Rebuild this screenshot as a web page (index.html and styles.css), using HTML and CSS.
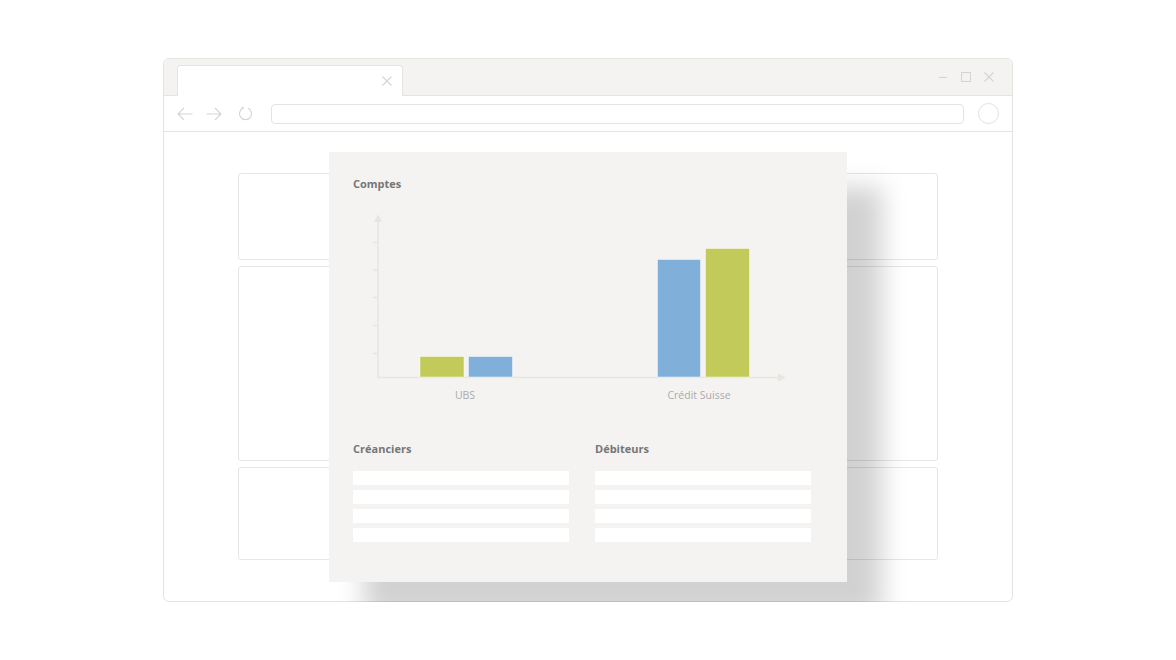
FILE: index.html
```html
<!DOCTYPE html>
<html lang="fr">
<head>
    <meta charset="UTF-8">
    <meta name="viewport" content="width=device-width, initial-scale=1.0">
    <title>Comptes</title>
    <link rel="stylesheet" href="styles.css">
</head>
<body>
    <div class="window">
        <div class="tabstrip">
            <div class="tab">
                <svg class="icon-close" width="10" height="10" viewBox="0 0 10 10">
                    <path d="M0.5 0.5 L9.5 9.5 M9.5 0.5 L0.5 9.5" />
                </svg>
            </div>
            <div class="win-controls">
                <svg width="10" height="10" viewBox="0 0 10 10"><path d="M1 5.5 H9" /></svg>
                <svg width="10" height="10" viewBox="0 0 10 10"><rect x="0.5" y="0.5" width="9" height="9" /></svg>
                <svg width="10" height="10" viewBox="0 0 10 10"><path d="M0.5 0.5 L9.5 9.5 M9.5 0.5 L0.5 9.5" /></svg>
            </div>
        </div>

        <div class="toolbar">
            <svg class="nav back" width="16" height="14" viewBox="0 0 16 14">
                <path d="M15.5 7 H1 M7 1 L1 7 L7 13" />
            </svg>
            <svg class="nav forward" width="16" height="14" viewBox="0 0 16 14">
                <path d="M0.5 7 H15 M9 1 L15 7 L9 13" />
            </svg>
            <svg class="nav reload" width="15" height="15" viewBox="0 0 15 15">
                <path d="M5.2 2.1 A6 6 0 1 0 9.8 2.1" />
                <path d="M4.6 0.5 L5.2 2.1 L3.4 2.8" />
            </svg>
            <div class="address"></div>
            <div class="profile"></div>
        </div>

        <div class="content">
            <div class="panel panel-top"></div>
            <div class="panel panel-mid"></div>
            <div class="panel panel-bottom"></div>

            <div class="card">
                <h2 class="card-title">Comptes</h2>
                <svg class="chart" width="470" height="196" viewBox="0 0 470 196">
                    <g class="axis">
                        <path d="M25 11 V167.5 H426" />
                        <path d="M20 32.5 H25 M20 60 H25 M20 87.5 H25 M20 115.5 H25 M20 143.5 H25" />
                        <polygon points="21,12 25,4.5 29,12" />
                        <polygon points="425,163.5 433,167.5 425,171.5" />
                    </g>
                    <g class="bars">
                        <rect class="green" x="67" y="146.5" width="44" height="20.5" />
                        <rect class="blue" x="115.5" y="146.5" width="44" height="20.5" />
                        <rect class="blue" x="304.5" y="49.5" width="43" height="117.5" />
                        <rect class="green" x="352.5" y="38.5" width="44" height="128.5" />
                    </g>
                    <text class="label" x="112" y="189">UBS</text>
                    <text class="label" x="346" y="189">Crédit Suisse</text>
                </svg>

                <div class="lists">
                    <div class="list">
                        <h3 class="list-title">Créanciers</h3>
                        <div class="row"></div>
                        <div class="row"></div>
                        <div class="row"></div>
                        <div class="row"></div>
                    </div>
                    <div class="list">
                        <h3 class="list-title">Débiteurs</h3>
                        <div class="row"></div>
                        <div class="row"></div>
                        <div class="row"></div>
                        <div class="row"></div>
                    </div>
                </div>
            </div>
        </div>
    </div>
</body>
</html>
```

FILE: styles.css
```css
body {
    margin: 0;
    background-color: #ffffff;
    font-family: 'Open Sans', 'Lato', sans-serif;
}

.window {
    position: relative;
    box-sizing: border-box;
    width: 850px;
    height: 544px;
    margin: 58px auto 0;
    border: 1px solid #e6e4e1;
    border-radius: 6px;
    background-color: #fff;
}

/* tab strip */

.tabstrip {
    display: flex;
    align-items: flex-end;
    height: 36px;
    background-color: #f4f3f1;
    border-bottom: 1px solid #e6e4e1;
    border-radius: 6px 6px 0 0;
}

.tab {
    position: relative;
    box-sizing: border-box;
    display: flex;
    justify-content: flex-end;
    align-items: center;
    width: 226px;
    height: 31px;
    margin-left: 13px;
    margin-bottom: -1px;
    padding-right: 10px;
    background-color: #fff;
    border: 1px solid #e6e4e1;
    border-bottom: none;
    border-radius: 4px 4px 0 0;
}

.tab svg,
.win-controls svg,
.nav {
    fill: none;
    stroke: #d6d4d1;
    stroke-width: 1.1;
}

.win-controls {
    display: flex;
    align-items: center;
    gap: 13px;
    margin-left: auto;
    padding-right: 18px;
    align-self: center;
}

/* toolbar */

.toolbar {
    display: flex;
    align-items: center;
    height: 35px;
    padding: 0 13px;
    border-bottom: 1px solid #e6e4e1;
}

.nav.forward {
    margin-left: 13px;
}

.nav.reload {
    margin-left: 16px;
}

.address {
    flex: 1;
    height: 18px;
    margin-left: 18px;
    border: 1px solid #e6e4e1;
    border-radius: 4px;
}

.profile {
    box-sizing: border-box;
    width: 21px;
    height: 21px;
    margin-left: 14px;
    border: 1px solid #e3e1de;
    border-radius: 50%;
}

/* page content */

.content {
    display: flex;
    flex-direction: column;
    gap: 6px;
    padding: 41px 74px;
}

.panel {
    border: 1px solid #e6e6e6;
    border-radius: 3px;
}

.panel-top {
    height: 85px;
}

.panel-mid {
    height: 193px;
}

.panel-bottom {
    height: 91px;
}

/* floating card */

.card {
    position: absolute;
    top: 93px;
    left: 165px;
    box-sizing: border-box;
    width: 518px;
    height: 430px;
    padding: 24px 24px 0;
    background-color: #f4f3f1;
    box-shadow: 35px 35px 24px rgba(0, 0, 0, 0.18);
}

.card-title,
.list-title {
    margin: 0;
    font-size: 11px;
    line-height: 16px;
    font-weight: 700;
    color: #767676;
}

.chart {
    display: block;
    margin-top: 18px;
}

.axis path {
    fill: none;
    stroke: #e6e5e2;
    stroke-width: 1.5;
}

.axis polygon {
    fill: #e6e5e2;
}

.bars rect {
    stroke: rgba(255, 255, 255, 0.45);
    stroke-width: 1;
}

.bars .green {
    fill: #c2ca5a;
}

.bars .blue {
    fill: #80b0da;
}

.label {
    font-family: 'Open Sans', 'Lato', sans-serif;
    font-size: 10.5px;
    fill: #aaa;
    text-anchor: middle;
}

.lists {
    display: grid;
    grid-template-columns: 216px 216px;
    gap: 26px;
    margin-top: 35px;
}

.list-title {
    margin-bottom: 14px;
}

.row {
    height: 14px;
    margin-bottom: 5px;
    background-color: #fff;
}
```
